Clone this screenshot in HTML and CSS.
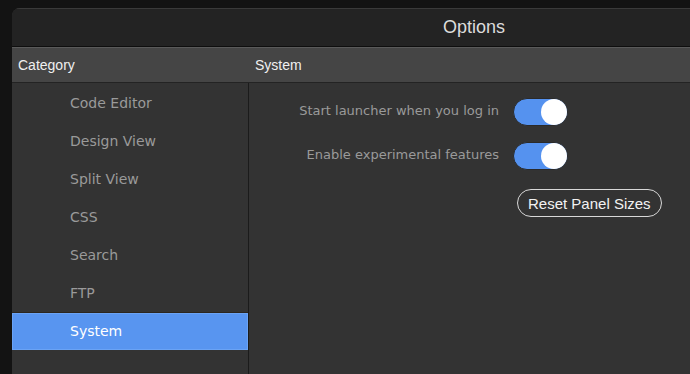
FILE: index.html
```html
<!DOCTYPE html>
<html lang="en">
<head>
    <meta charset="UTF-8">
    <title>Options</title>
    <link rel="stylesheet" href="styles.css">
</head>
<body>
    <div class="window">
        <div class="titlebar">Options</div>
        <div class="header">
            <div class="head-cat">Category</div>
            <div class="head-page">System</div>
        </div>
        <div class="main">
            <div class="sidebar">
                <div class="item">Code Editor</div>
                <div class="item">Design View</div>
                <div class="item">Split View</div>
                <div class="item">CSS</div>
                <div class="item">Search</div>
                <div class="item">FTP</div>
                <div class="item selected">System</div>
            </div>
            <div class="content">
                <div class="label">Start launcher when you log in</div>
                <div class="toggle on"><span class="knob"></span></div>
                <div class="label">Enable experimental features</div>
                <div class="toggle on"><span class="knob"></span></div>
                <div></div>
                <button class="reset">Reset Panel Sizes</button>
            </div>
        </div>
    </div>
</body>
</html>
```

FILE: styles.css
```css
body {
    margin: 0;
    height: 374px;
    overflow: hidden;
    background: #131313;
    font-family: "Liberation Sans", Arial, sans-serif;
}
.window {
    margin: 8px 0 0 12px;
    height: 366px;
    background: #333;
    border-radius: 8px 0 0 0;
    overflow: hidden;
}
/* the real window is wider than the shot, so the title sits right of centre */
.titlebar {
    height: 37px;
    line-height: 37px;
    padding-left: 246px;
    background: #232323;
    border-top: 1px solid #3a3a3a;
    border-bottom: 1px solid #0e0e0e;
    text-align: center;
    color: #dcdcdc;
    font-size: 18px;
}
.header {
    display: flex;
    height: 34px;
    line-height: 34px;
    background: #454545;
    border-top: 1px solid #5a5a5a;
    border-bottom: 1px solid #232323;
    color: #f0f0f0;
    font-size: 14px;
}
.head-cat {
    width: 230px;
    padding-left: 6px;
}
.head-page {
    padding-left: 7px;
}
.main {
    display: flex;
    height: 291px;
}
.sidebar {
    width: 236px;
    padding-top: 1px;
    border-right: 1px solid #1b1b1b;
    font-family: "DejaVu Sans", sans-serif;
    font-size: 14px;
    color: #9a9a9a;
}
.item {
    height: 38px;
    line-height: 38px;
    padding-left: 58px;
}
.item.selected {
    height: 37px;
    line-height: 37px;
    background: #5895f0;
    border-top: 1px solid #2b2620;
    color: #fff;
    box-shadow: inset 0 0 0 1px #6aa3f5;
}
.content {
    display: grid;
    grid-template-columns: 250px auto;
    column-gap: 14px;
    row-gap: 16px;
    align-items: center;
    align-content: start;
    justify-content: start;
    padding-top: 15px;
}
.label {
    margin-top: -3px;
    text-align: right;
    font-family: "DejaVu Sans", sans-serif;
    font-size: 13px;
    color: #9a9a9a;
}
.toggle {
    position: relative;
    width: 55px;
    height: 28px;
    box-sizing: border-box;
    border-radius: 14px;
    background: #5592ef;
    border: 1px solid #2a2a2a;
}
.knob {
    position: absolute;
    right: 0;
    top: 0;
    width: 26px;
    height: 26px;
    border-radius: 50%;
    background: #fff;
}
.reset {
    justify-self: start;
    margin: 3px 0 0 4px;
    height: 28px;
    padding: 0 10px;
    border: 1px solid #d8d8d8;
    border-radius: 14px;
    background: transparent;
    color: #f2f2f2;
    font-family: "Liberation Sans", Arial, sans-serif;
    font-size: 15px;
}
```
